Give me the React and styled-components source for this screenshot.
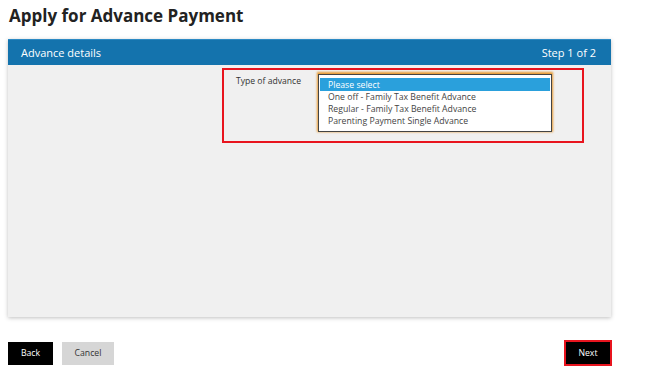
import styled, { createGlobalStyle } from 'styled-components';

const Global = createGlobalStyle`
	body {
		margin: 0;
		background: #fff;
		font-family: 'Open Sans', 'Noto Sans', sans-serif;
		color: #333;
	}
`;

const Page = styled.div`
	width: 650px;
	height: 376px;
	padding: 0 39px 0 8px;
	box-sizing: border-box;
`;

const Title = styled.h1`
	margin: 0;
	padding: 4px 0 0 1px;
	height: 36px;
	box-sizing: border-box;
	font-size: 17px;
	font-weight: 700;
	color: #222;
`;

const Panel = styled.section`
	width: 603px;
	box-shadow: 0 1px 4px rgba(0, 0, 0, 0.25);
`;

const PanelHeader = styled.div`
	height: 26px;
	margin-top: 3px;
	background: #1473ad;
	border-top: 1px solid #2d8ac4;
	box-sizing: border-box;
	display: flex;
	align-items: center;
	justify-content: space-between;
	padding: 0 15px 0 13px;
	color: #fff;
	font-size: 11px;
`;

const PanelBody = styled.div`
	height: 252px;
	background: #f0f0f0;
	display: flex;
	justify-content: flex-end;
	align-items: flex-start;
	padding: 3px 27px 0 0;
	box-sizing: border-box;
`;

const Highlight = styled.div`
	width: 362px;
	height: 75px;
	border: 2px solid #e8141e;
	box-sizing: border-box;
	display: flex;
	align-items: flex-start;
	padding: 4px 0 0 12px;
`;

const Label = styled.label`
	width: 82px;
	font-size: 8.6px;
	color: #333;
	padding-top: 1px;
`;

const ListBox = styled.ul`
	list-style: none;
	margin: 0;
	width: 234px;
	height: 58px;
	box-sizing: border-box;
	border: 1px solid #444;
	background: #fff;
	padding: 3px 1px 0;
	box-shadow: 0 -1px 2px 1px rgba(229, 140, 20, 0.85);
`;

const Option = styled.li`
	height: 12px;
	line-height: 13px;
	padding-left: 8px;
	font-size: 8.7px;
	color: ${(p) => (p.selected ? '#fff' : '#444')};
	background: ${(p) => (p.selected ? '#2aa0dc' : 'transparent')};
	${(p) => p.selected && 'height: 13px; line-height: 15px;'}
`;

const Actions = styled.div`
	display: flex;
	align-items: center;
	gap: 9px;
	margin-top: 23px;
	width: 604px;
`;

const Button = styled.button`
	height: 23px;
	padding: 0;
	width: ${(p) => p.w}px;
	border: none;
	font-family: inherit;
	font-size: 8.7px;
	background: ${(p) => (p.secondary ? '#d6d6d6' : '#000')};
	color: ${(p) => (p.secondary ? '#333' : '#fff')};
	${(p) =>
		p.primary &&
		`
		margin-left: auto;
		height: 26px;
		border: 2px solid #e8141e;
	`}
`;

const options = [
	'Please select',
	'One off - Family Tax Benefit Advance',
	'Regular - Family Tax Benefit Advance',
	'Parenting Payment Single Advance',
];

export default function App() {
	return (
		<Page>
			<Global />
			<Title>Apply for Advance Payment</Title>
			<Panel>
				<PanelHeader>
					<span>Advance details</span>
					<span>Step 1 of 2</span>
				</PanelHeader>
				<PanelBody>
					<Highlight>
						<Label>Type of advance</Label>
						<ListBox>
							{options.map((o, i) => (
								<Option key={o} selected={i === 0}>{o}</Option>
							))}
						</ListBox>
					</Highlight>
				</PanelBody>
			</Panel>
			<Actions>
				<Button w={45}>Back</Button>
				<Button w={52} secondary>Cancel</Button>
				<Button w={48} primary>Next</Button>
			</Actions>
		</Page>
	);
}
